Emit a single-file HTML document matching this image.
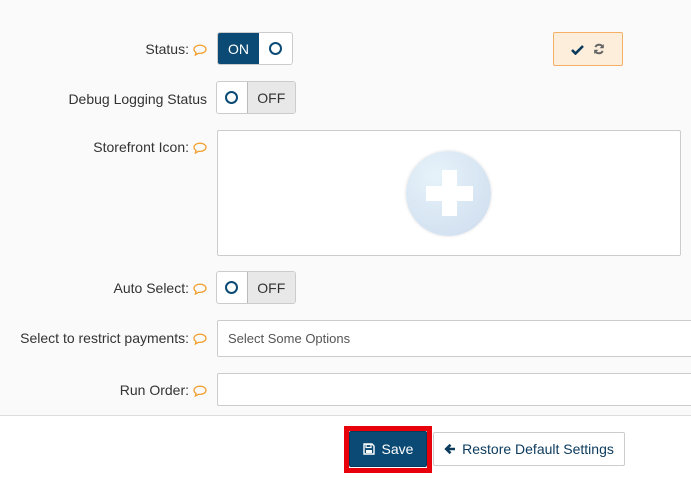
<!DOCTYPE html>
<html><head><style>
body{margin:0;width:691px;height:481px;background:#fff;font-family:"Liberation Sans",sans-serif;font-size:14px;color:#333;position:relative;overflow:hidden}
.top{position:absolute;left:0;top:0;width:691px;height:415px;background:#fafafa;border-bottom:1px solid #ddd}
.l{position:absolute;text-align:right;color:#333;font-size:14px;white-space:nowrap}
.l svg{vertical-align:-2px;margin-left:4px}
.t{position:absolute;display:flex;border:1px solid #ccc;border-radius:3px;background:#fff;height:33px;box-sizing:border-box;overflow:hidden}
.t div{display:flex;align-items:center;justify-content:center}
.on{background:#0b4a74;color:#fff;width:41px}
.off{background:#e8e8e8;width:48px;border-left:1px solid #bbb;color:#333}
.o span{width:9px;height:9px;border:2.5px solid #0b4a74;border-radius:50%}
.box{position:absolute;background:#fff;border:1px solid #ccc;border-radius:2px;box-sizing:border-box}
</style></head><body>
<div class="top"></div>
<svg width="0" height="0" style="position:absolute"><defs><symbol id="bb" viewBox="0 0 14 12"><path d="M7 1.2C3.6 1.2 1 3 1 5.3c0 1.3.8 2.4 2 3.1L2.4 11 5.6 9.3c.5.1.9.1 1.4.1 3.4 0 6-1.8 6-4.1S10.4 1.2 7 1.2z" fill="none" stroke="#f0a030" stroke-width="1.3"/></symbol></defs></svg>
<div class="l" style="top:41px;right:484px">Status:<svg width="14" height="12"><use href="#bb"/></svg></div>
<div class="t" style="left:217px;top:32px;width:76px"><div class="on">ON</div><div class="o" style="width:33px"><span></span></div></div>
<div class="l" style="top:91px;right:484px">Debug Logging Status</div>
<div class="t" style="left:216px;top:81px;width:80px"><div class="o" style="width:30px"><span></span></div><div class="off">OFF</div></div>
<div style="position:absolute;left:553px;top:32px;width:70px;height:34px;box-sizing:border-box;background:#fdeedc;border:1px solid #f5b067;border-radius:2px;display:flex;align-items:center;justify-content:center;gap:9px">
<svg width="13" height="11" viewBox="0 0 13 11"><path d="M1 6l3.5 3.5L12 2" fill="none" stroke="#0b3a5c" stroke-width="2.6"/></svg>
<svg width="12" height="12" viewBox="0 0 12 12"><path d="M10 4.5A4.2 4.2 0 0 0 2.3 4M2 7.5A4.2 4.2 0 0 0 9.7 8" fill="none" stroke="#666" stroke-width="2"/><path d="M10.8 1v4.3H6.5zM1.2 11V6.7h4.3z" fill="#666"/></svg></div>
<div class="l" style="top:139px;right:484px">Storefront Icon:<svg width="14" height="12"><use href="#bb"/></svg></div>
<div class="box" style="left:217px;top:130px;width:464px;height:126px"></div>
<div style="position:absolute;left:406px;top:151px;width:85px;height:85px;border-radius:50%;background:radial-gradient(circle at 35% 30%,#e6f3fa,#cddbee);box-shadow:0 0 3px #ddd"></div>
<div style="position:absolute;left:442px;top:170px;width:15px;height:46px;background:#fff"></div>
<div style="position:absolute;left:426px;top:186px;width:47px;height:15px;background:#fff"></div>
<div class="l" style="top:280px;right:484px">Auto Select:<svg width="14" height="12"><use href="#bb"/></svg></div>
<div class="t" style="left:216px;top:271px;width:80px"><div class="o" style="width:30px"><span></span></div><div class="off">OFF</div></div>
<div class="l" style="top:330px;right:484px">Select to restrict payments:<svg width="14" height="12"><use href="#bb"/></svg></div>
<div class="box" style="left:217px;top:320px;width:480px;height:37px;font-size:13px;color:#555;padding:10px 0 0 10px">Select Some Options</div>
<div class="l" style="top:382px;right:484px">Run Order:<svg width="14" height="12"><use href="#bb"/></svg></div>
<div class="box" style="left:217px;top:373px;width:480px;height:33px"></div>
<div style="position:absolute;left:344px;top:426px;width:88px;height:47px;box-sizing:border-box;border:5px solid #e8000b"></div>
<div style="position:absolute;left:349px;top:431px;width:78px;height:36px;background:#0b4a74;border:1px solid #083a5c;box-sizing:border-box;border-radius:2px;color:#fff;display:flex;align-items:center;justify-content:center;gap:7px;white-space:nowrap">
<svg width="12" height="12" viewBox="0 0 12 12"><path d="M1 1h8l2 2v8H1z" fill="none" stroke="#fff" stroke-width="1.4"/><rect x="3" y="1.5" width="5" height="3" fill="none" stroke="#fff" stroke-width="1.2"/><rect x="3" y="7" width="6" height="3" fill="#fff"/></svg>Save</div>
<div style="position:absolute;left:433px;top:432px;width:192px;height:34px;background:#fff;border:1px solid #ccc;box-sizing:border-box;border-radius:2px;color:#0b3a5c;display:flex;align-items:center;justify-content:center;gap:6px;white-space:nowrap">
<svg width="12" height="12" viewBox="0 0 12 12"><path d="M11 6H3M6.5 1.8L2.2 6l4.3 4.2" fill="none" stroke="#0b3a5c" stroke-width="2.6"/></svg>Restore Default Settings</div>
</body></html>
